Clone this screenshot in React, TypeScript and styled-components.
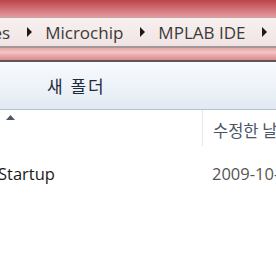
import styled, { createGlobalStyle } from "styled-components";

const GlobalStyle = createGlobalStyle`
  html, body {
    margin: 0;
    padding: 0;
    width: 276px;
    height: 260px;
    overflow: hidden;
    background: #ffffff;
  }
  body {
    font-family: "Open Sans", "Noto Sans", "Noto Sans CJK KR", sans-serif;
  }
`;

const crumbs = ["Program Files", "Microchip", "MPLAB IDE"];

const App = () => {
  return (
    <Window>
      <GlobalStyle />
      <Frame>
        <GlassTop />
        <AddressBar>
          <CrumbTrack>
            {crumbs.map((c, i) => (
              <Crumb key={c} first={i === 0}>
                <CrumbText>{c}</CrumbText>
                <Arrow>
                  <svg width="5" height="10" viewBox="0 0 5 10">
                    <path d="M0 0 L5 5 L0 10 Z" fill="#1a1a1a" />
                  </svg>
                </Arrow>
              </Crumb>
            ))}
          </CrumbTrack>
        </AddressBar>
        <GlassBottom />
      </Frame>
      <Toolbar>
        <ToolButton>새 폴더</ToolButton>
      </Toolbar>
      <HeaderRow>
        <NameHeader>
          <SortMark>
            <svg width="9" height="5" viewBox="0 0 9 5">
              <path d="M0 5 L4.5 0 L9 5 Z" fill="#4d5868" />
            </svg>
          </SortMark>
        </NameHeader>
        <DateHeader>수정한 날짜</DateHeader>
      </HeaderRow>
      <FileRow>
        <FileName>Startup</FileName>
        <FileDate>2009-10-05 오후 3:12</FileDate>
      </FileRow>
    </Window>
  );
};

export default App;

const Window = styled.div`
  width: 276px;
  height: 260px;
  display: flex;
  flex-direction: column;
  overflow: hidden;
  background: #ffffff;
`;

const Frame = styled.div`
  display: flex;
  flex-direction: column;
  flex-shrink: 0;
  border-bottom: 2px solid #5e5455;
`;

const GlassTop = styled.div`
  height: 17px;
  flex-shrink: 0;
  background: linear-gradient(180deg, #b8454a 0%, #cf6a6f 45%, #e39a9d 100%);
`;

const GlassBottom = styled.div`
  height: 12px;
  flex-shrink: 0;
  background: linear-gradient(
    180deg,
    #e7a5a7 0%,
    #f2c6c6 35%,
    #e8a3a5 70%,
    #d98c8f 100%
  );
`;

const AddressBar = styled.div`
  height: 31px;
  flex-shrink: 0;
  background: linear-gradient(180deg, #f8efef 0%, #f4e9e9 60%, #efe3e3 100%);
  border-top: 1px solid #c9a2a4;
  border-bottom: 2px solid #a69697;
  box-sizing: border-box;
  display: flex;
  align-items: center;
  overflow: hidden;
`;

const CrumbTrack = styled.div`
  display: flex;
  align-items: center;
  white-space: nowrap;
`;

const Crumb = styled.div<{ first: boolean }>`
  display: flex;
  align-items: center;
  flex-shrink: 0;
  margin-left: ${(p) => (p.first ? "-98px" : "0")};
`;

const CrumbText = styled.span`
  font-size: 17px;
  color: #3a3a3a;
`;

const Arrow = styled.span`
  display: flex;
  align-items: center;
  padding: 0 13px 0 17px;
`;

const Toolbar = styled.div`
  height: 47px;
  flex-shrink: 0;
  display: flex;
  align-items: center;
  padding-left: 47px;
  background: linear-gradient(180deg, #f8fafd 0%, #eef3f9 50%, #e2e9f2 100%);
  border-bottom: 1px solid #b7c2d0;
`;

const ToolButton = styled.span`
  font-family: "Noto Sans CJK KR", sans-serif;
  font-size: 17px;
  color: #1e2a3a;
  letter-spacing: 2px;
`;

const HeaderRow = styled.div`
  height: 36px;
  flex-shrink: 0;
  display: flex;
  background: #ffffff;
`;

const NameHeader = styled.div`
  width: 202px;
  flex-shrink: 0;
  border-right: 1px solid #e3e7ec;
  position: relative;
`;

const SortMark = styled.span`
  position: absolute;
  left: 6px;
  top: 5px;
  display: flex;
`;

const DateHeader = styled.div`
  padding-left: 10px;
  padding-top: 8px;
  font-family: "Noto Sans CJK KR", sans-serif;
  font-size: 16.5px;
  color: #4a5566;
  white-space: nowrap;
`;

const FileRow = styled.div`
  display: flex;
  align-items: center;
  height: 30px;
  margin-top: 12px;
`;

const FileName = styled.div`
  width: 214px;
  flex-shrink: 0;
  margin-left: -2px;
  font-size: 16.5px;
  color: #1a1a1a;
`;

const FileDate = styled.div`
  font-size: 16.5px;
  color: #555555;
  white-space: nowrap;
`;
